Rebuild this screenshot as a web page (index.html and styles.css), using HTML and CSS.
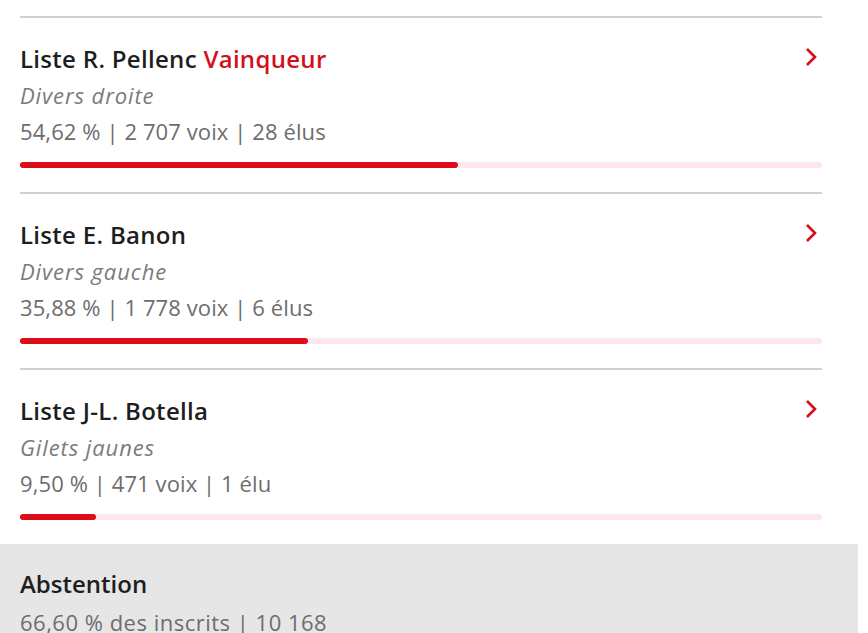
FILE: index.html
```html
<!DOCTYPE html>
<html lang="fr">
<head>
<meta charset="utf-8">
<title>Résultats</title>
<link rel="stylesheet" href="styles.css">
</head>
<body>
<div class="page">
  <ul class="lists">
    <li class="item">
      <div class="head">
        <h3 class="title">Liste R. Pellenc <span class="winner">Vainqueur</span></h3>
        <svg class="chev" width="14" height="20" viewBox="0 0 14 20"><path d="M3 2 L11 10 L3 18" fill="none" stroke="#d2101c" stroke-width="2.6"/></svg>
      </div>
      <p class="party">Divers droite</p>
      <p class="stats">54,62 % | 2 707 voix | 28 élus</p>
      <div class="bar"><div class="fill" style="width:54.62%"></div></div>
    </li>
    <li class="item">
      <div class="head">
        <h3 class="title">Liste E. Banon</h3>
        <svg class="chev" width="14" height="20" viewBox="0 0 14 20"><path d="M3 2 L11 10 L3 18" fill="none" stroke="#d2101c" stroke-width="2.6"/></svg>
      </div>
      <p class="party">Divers gauche</p>
      <p class="stats">35,88 % | 1 778 voix | 6 élus</p>
      <div class="bar"><div class="fill" style="width:35.88%"></div></div>
    </li>
    <li class="item">
      <div class="head">
        <h3 class="title">Liste J-L. Botella</h3>
        <svg class="chev" width="14" height="20" viewBox="0 0 14 20"><path d="M3 2 L11 10 L3 18" fill="none" stroke="#d2101c" stroke-width="2.6"/></svg>
      </div>
      <p class="party">Gilets jaunes</p>
      <p class="stats">9,50 % | 471 voix | 1 élu</p>
      <div class="bar"><div class="fill" style="width:9.5%"></div></div>
    </li>
  </ul>
  <section class="abst">
    <h3 class="title">Abstention</h3>
    <p class="stats">66,60 % des inscrits | 10 168</p>
  </section>
</div>
</body>
</html>
```
FILE: styles.css
```css
* { box-sizing: border-box; }
html, body { margin: 0; padding: 0; background: #fff; }
body { font-family: "Open Sans", "Noto Sans", sans-serif; }
.page { width: 858px; padding-top: 16px; }
.lists { list-style: none; margin: 0; padding: 0 36px 0 20px; }
.item { border-top: 2px solid #c9d1d8; padding-top: 23px; height: 176px; }
.head { display: flex; justify-content: space-between; align-items: flex-start; }
.title { margin: 0; font-size: 24px; line-height: 36px; font-weight: 600; color: #1e1e1e; letter-spacing: 0.3px; }
.winner { color: #d2101c; }
.chev { margin-top: 6px; margin-right: 4px; }
.party { margin: 0; font-size: 22px; line-height: 36px; font-style: italic; color: #7b7b7b; letter-spacing: 0.9px; }
.stats { margin: 0; font-size: 22px; line-height: 37px; color: #6d6d6d; letter-spacing: 0.1px; }
.bar { margin-top: 12px; height: 6px; border-radius: 3px; background: #fde9eb; }
.fill { height: 6px; border-radius: 3px; background: #e00b19; }
.abst { background: #e6e6e6; padding: 22px 20px 0; height: 89px; }
.abst .title { line-height: 36px; letter-spacing: 0; }
.abst .stats { line-height: 40px; letter-spacing: 0.5px; }
```
